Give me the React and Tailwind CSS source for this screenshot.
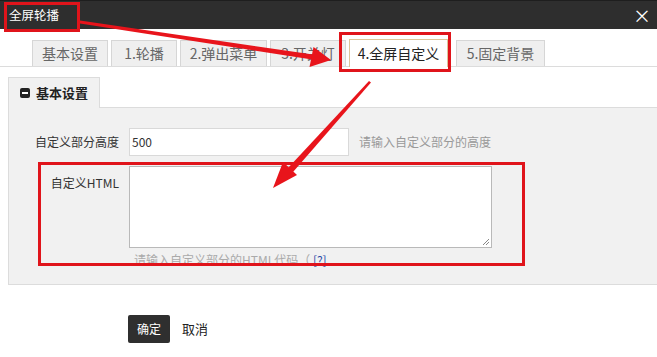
import React from "react";

const tabs = [
  { label: "基本设置", w: 76 },
  { label: "1.轮播", w: 66 },
  { label: "2.弹出菜单", w: 87 },
  { label: "3.开关灯", w: 76 },
];

export default function App() {
  return (
    <div
      className="relative w-[657px] h-[357px] overflow-hidden bg-white"
      style={{ fontFamily: '"Noto Sans CJK SC", "Noto Sans", sans-serif' }}
    >
      {/* header */}
      <div className="flex h-[29px] items-center justify-between border-t border-[#1e1e1e] bg-[#2e2e2e] pl-[9px] pr-[6px] text-white">
        <span className="text-[12.5px] leading-none">全屏轮播</span>
        <span className="text-[18px] leading-none">×</span>
      </div>

      {/* tabs */}
      <div className="mt-[11px] flex h-[27px] items-end border-b border-[#dcdcdc] pl-[32px]">
        {tabs.map((t) => (
          <div
            key={t.label}
            className="mr-[3px] flex h-[26px] items-center justify-center border border-b-0 border-[#d6d6d6] bg-[#efefef] text-[14px] text-[#666]"
            style={{ width: t.w }}
          >
            {t.label}
          </div>
        ))}
        <div className="-mb-px mr-[8px] flex h-[28px] w-[99px] items-center justify-center border border-b-0 border-[#dcc59a] bg-white text-[14px] text-[#222]">
          4.全屏自定义
        </div>
        <div className="flex h-[26px] w-[89px] items-center justify-center border border-b-0 border-[#d6d6d6] bg-[#efefef] text-[14px] text-[#666]">
          5.固定背景
        </div>
      </div>

      {/* section */}
      <div className="ml-[8px] mt-[10px]">
        <div className="relative z-10 -mb-px flex h-[31px] w-[92px] items-center gap-[6px] border border-b-0 border-[#dcdcdc] bg-[#f1f1f1] pl-[11px]">
          <span className="flex h-[10px] w-[10px] items-center justify-center rounded-[2px] bg-[#222]">
            <span className="h-[2px] w-[6px] bg-white" />
          </span>
          <span className="text-[13px] font-bold text-[#222]">基本设置</span>
        </div>
        <div className="h-[178px] border border-r-0 border-[#dcdcdc] bg-[#f1f1f1] pt-[20px]">
          <div className="flex items-center">
            <div className="w-[111px] pr-px text-right text-[12px] text-[#333]">自定义部分高度</div>
            <div className="ml-[9px] flex h-[28px] w-[220px] items-center border border-[#d9d9d9] bg-white px-[2px] text-[12px] text-[#333]">
              500
            </div>
            <div className="ml-[10px] text-[12px] text-[#999]">请输入自定义部分的高度</div>
          </div>
          <div className="mt-[10px] flex items-start">
            <div className="w-[111px] pr-px pt-[8px] text-right text-[12px] text-[#333]">自定义HTML</div>
            <div className="ml-[9px]">
              <div className="relative h-[82px] w-[363px] border border-[#b9b9b9] bg-white">
                <svg className="absolute bottom-[1px] right-[1px]" width="8" height="8" viewBox="0 0 8 8">
                  <path d="M7 1 L1 7 M7 4 L4 7" stroke="#888" strokeWidth="1" />
                </svg>
              </div>
              <div className="ml-[5px] mt-[3px] text-[12px] text-[#aaa]">
                请输入自定义部分的HTML代码（ <span className="text-[#2b4aa8]">[?]</span>
              </div>
            </div>
          </div>
        </div>
      </div>

      {/* buttons */}
      <div className="mt-[30px] flex items-center pl-[128px]">
        <div className="flex h-[28px] w-[42px] items-center justify-center rounded-[2px] bg-[#2f2f2f] text-[12px] text-white">
          确定
        </div>
        <div className="ml-[12px] text-[13px] text-[#222]">取消</div>
      </div>

      {/* annotations */}
      <div className="pointer-events-none absolute left-[4px] top-[2px] h-[30px] w-[76px] border-[3px] border-[#e0141b]" />
      <div className="pointer-events-none absolute left-[339px] top-[32px] h-[40px] w-[112px] border-[3px] border-[#e0141b]" />
      <div className="pointer-events-none absolute left-[38px] top-[162px] h-[104px] w-[487px] border-[3px] border-[#e0141b]" />
      <svg className="pointer-events-none absolute left-0 top-0" width="657" height="357" viewBox="0 0 657 357">
        <polygon points="80,20.5 80,23.5 312,59.5 313,54.5" fill="#e8141b" />
        <polygon points="331,60 313.5,47 309.5,67" fill="#e8141b" />
        <polygon points="369,81 371,82.5 293,172 288,168" fill="#e8141b" />
        <polygon points="273,188 283,162 297,175" fill="#e8141b" />
      </svg>
    </div>
  );
}
